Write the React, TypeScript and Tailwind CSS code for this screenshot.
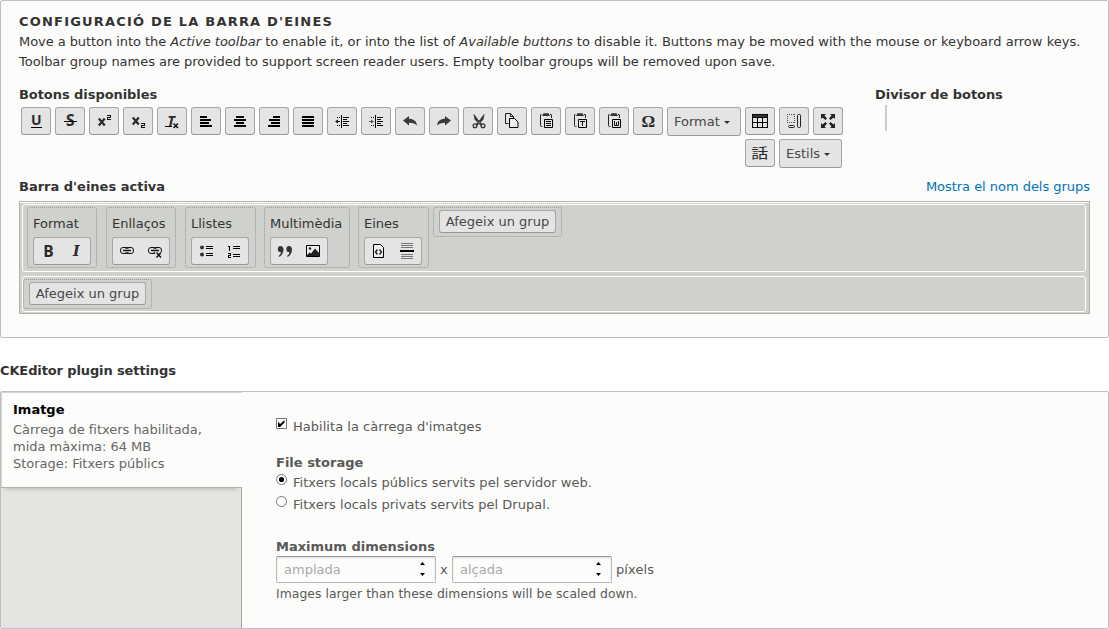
import React from "react";

type Children = { children?: React.ReactNode };

function Icon({ children }: Children) {
  return (
    <svg
      width="16"
      height="16"
      viewBox="0 0 16 16"
      fill="none"
      stroke="#111"
      strokeWidth="1"
      className="block shrink-0 overflow-visible"
    >
      {children}
    </svg>
  );
}

type GlyphProps = { x: number; y: number; size: number; italic?: boolean; bold?: boolean; text: string; family?: string };

function Glyph({ x, y, size, italic, bold = true, text, family = "DejaVu Sans, sans-serif" }: GlyphProps) {
  return (
    <text
      x={x}
      y={y}
      fontSize={size}
      fontWeight={bold ? 700 : 400}
      fontStyle={italic ? "italic" : "normal"}
      fontFamily={family}
      fill="#2b2b2b"
      stroke="none"
      textAnchor="middle"
    >
      {text}
    </text>
  );
}

const open = "Open Sans, sans-serif";

function Lines({ d, w = 2 }: { d: string; w?: number }) {
  return <path d={d} stroke="#000" strokeWidth={w} shapeRendering="crispEdges" />;
}

function Clipboard({ children }: Children) {
  return (
    <Icon>
      <path d="M3.500 1.500H3a.5.5 0 0 0-.5.5v10.500a1 1 0 0 0 1 1H4.500M12 1.500h1a.5.5 0 0 1 .5.5v3" stroke="#222" />
      <path d="M5 1.200Q5 .3 6 .3h4Q11 .3 11 1.200L12 3H4z" fill="#333" stroke="none" />
      <path d="M6.500 6.500h8v8h-8z" stroke="#000" />
      {children}
    </Icon>
  );
}

function Chain() {
  return (
    <g>
      <rect x="1.500" y="4.500" width="8" height="6" rx="2.500" />
      <rect x="6.500" y="4.500" width="8" height="6" rx="2.500" />
      <path d="M4.500 7.500h7" stroke="#e4e4e4" strokeWidth="3" />
      <path d="M4 7.500h8" strokeWidth="1.500" />
    </g>
  );
}

const icons: Record<string, React.ReactNode> = {
  underline: (
    <Icon>
      <Glyph x={8.3} y={12} size={14} text="U" family={open} />
      <Lines d="M3 14.500h11" w={1} />
    </Icon>
  ),
  strike: (
    <Icon>
      <Glyph x={8.3} y={13} size={15.500} text="S" family={open} />
      <Lines d="M2 8.500h13" w={1} />
    </Icon>
  ),
  sup: (
    <Icon>
      <path d="M2.800 5.500l6 7M8.800 5.500l-6 7" stroke="#2b2b2b" strokeWidth="2.200" />
      <path d="M11 2.500h3.500v2h-3v2H15" shapeRendering="crispEdges" />
    </Icon>
  ),
  sub: (
    <Icon>
      <path d="M2.800 4.500l6 7M8.800 4.500l-6 7" stroke="#2b2b2b" strokeWidth="2.200" />
      <path d="M11 10.500h3.500v2h-3v2H15" shapeRendering="crispEdges" />
    </Icon>
  ),
  removeFormat: (
    <Icon>
      <Glyph x={7} y={12.500} size={14.500} italic text="T" family={open} />
      <Lines d="M1 13.500h7" w={1} />
      <path d="M9.500 10.500l4.500 4.500M14 10.500L9.500 15" strokeWidth="1.500" />
    </Icon>
  ),
  left: <Icon><Lines d="M2 4h7M2 7h11M2 10h9M2 13h12" /></Icon>,
  center: <Icon><Lines d="M4 4h8M2 7h12M4 10h8M2 13h12" /></Icon>,
  right: <Icon><Lines d="M7 4h7M3 7h11M5 10h9M2 13h12" /></Icon>,
  justify: <Icon><Lines d="M2 4h12M2 7h12M2 10h12M2 13h12" /></Icon>,
  outdent: (
    <Icon>
      <Lines w={1} d="M7.500 2v13M9 4.500h6M9 6.500h4M9 8.500h6M9 10.500h4M9 12.500h6M3 4.500h1M5 4.500h1M3 12.500h1M5 12.500h1M2 8.500h4" />
      <path d="M1 8.500l3-2v4z" fill="#111" stroke="none" />
    </Icon>
  ),
  indent: (
    <Icon>
      <Lines w={1} d="M7.500 2v13M9 4.500h6M9 6.500h4M9 8.500h6M9 10.500h4M9 12.500h6M3 4.500h1M5 4.500h1M3 12.500h1M5 12.500h1" />
      <path d="M1 8.500h4" stroke="#555" />
      <path d="M6 8.500l-3-2v4z" fill="#555" stroke="none" />
    </Icon>
  ),
  undo: (
    <Icon>
      <path d="M1 7.500L7 3v2.800c4.500 0 7.500 2 8 7-2-2.300-4-3-8-3V12.500z" fill="#3a3a3a" stroke="none" />
    </Icon>
  ),
  redo: (
    <Icon>
      <path d="M15 7.500L9 3v2.800c-4.500 0-7.500 2-8 7 2-2.300 4-3 8-3V12.500z" fill="#3a3a3a" stroke="none" />
    </Icon>
  ),
  cut: (
    <Icon>
      <path d="M4 1.500l1 5 6 6 1-1-4-4.500zM14 1.500l-1 5-6 6-1-1 4-4.500z" fill="#333" stroke="#333" strokeWidth=".8" />
      <circle cx="5" cy="12.700" r="1.900" stroke="#333" strokeWidth="1.300" />
      <circle cx="13" cy="12.700" r="1.900" stroke="#333" strokeWidth="1.300" />
    </Icon>
  ),
  copy: (
    <Icon>
      <path d="M4.500 10.500h-3V.5h5l3 3M6.500.5v3h3v2" stroke="#222" />
      <path d="M5.500 5.500h5l3.500 3.500v5.500H5.500z" fill="#eee" stroke="#000" />
    </Icon>
  ),
  paste: <Clipboard><Lines w={1} d="M8 8.500h5M8 10.500h5M8 12.500h5" /></Clipboard>,
  pasteText: <Clipboard><path d="M8 8.500h5M10.500 8.500V13" stroke="#111" /></Clipboard>,
  pasteWord: <Clipboard><path d="M8.500 8v4.500h4V8M10.500 9v3" stroke="#111" /></Clipboard>,
  omega: <Icon><Glyph x={8.300} y={14} size={17} text="Ω" family="Liberation Serif, serif" /></Icon>,
  table: (
    <Icon>
      <path d="M.5 1h15v3H.5z" fill="#333" stroke="none" />
      <Lines w={1} d="M0 1.500h16M.5 1v14M5.500 4v11M10.500 4v11M15.500 1v14M0 4.500h16M0 9.500h16M0 14.500h16" />
    </Icon>
  ),
  blocks: (
    <Icon>
      <path d="M1 1.500h8M1 9.500h8M1.500 1v9M8.500 1v9" strokeDasharray="1 1" stroke="#555" shapeRendering="crispEdges" />
      <rect x="2.500" y="12.500" width="6" height="2" rx="1" stroke="#222" />
      <rect x="11.500" y="1.500" width="3" height="13" rx="1" stroke="#222" />
    </Icon>
  ),
  maximize: (
    <Icon>
      <path d="M1 1h5L4.500 2.500l2.500 3L5.500 7 2.500 4.500 1 6zM15 1v5l-1.500-1.500L10.500 7 9 5.500l2.500-3L10 1zM1 15v-5l1.500 1.500L5.500 9l1.500 1.500-2.500 3L6 15zM15 15h-5l1.500-1.500-2.500-3L10.500 9l3 2.500L15 10z" fill="#222" stroke="none" />
    </Icon>
  ),
  language: (
    <Icon>
      <g transform="translate(-0.3 1.7) scale(1.06 0.88)">
        <Glyph x={7.500} y={13.200} size={16} bold={false} text="話" family="Noto Sans CJK JP, sans-serif" />
      </g>
    </Icon>
  ),
  bold: <Icon><Glyph x={8.500} y={13.500} size={15.500} text="B" family={open} /></Icon>,
  italic: <Icon><Glyph x={8.300} y={13} size={14} italic text="I" family="DejaVu Serif, serif" /></Icon>,
  link: <Icon><Chain /></Icon>,
  unlink: (
    <Icon>
      <Chain />
      <path d="M8 9h8v6H8z" fill="#e4e4e4" stroke="none" />
      <path d="M9.500 9.500l4.500 5M14 9.500l-4.500 5" strokeWidth="1.500" />
    </Icon>
  ),
  bullets: (
    <Icon>
      <circle cx="4" cy="4.500" r="2" fill="#333" stroke="none" />
      <circle cx="4" cy="11.500" r="2" fill="#333" stroke="none" />
      <Lines w={1} d="M8 3.500h7M8 5.500h7M8 10.500h7M8 12.500h7" />
    </Icon>
  ),
  numbers: (
    <Icon>
      <Lines w={1} d="M2 3.500h1.500v4M2 10.500h2.500v2h-2v2H5M7 3.500h7M7 5.500h7M7 11.500h7M7 13.500h7" />
    </Icon>
  ),
  quote: (
    <Icon>
      <path d="M3.300 3C5.500 3 6.500 4.500 6.500 6.500c0 3.500-2 6.500-4.500 7.300L1.500 13c1.500-1 2.300-2.500 2.500-4C2 9.300.8 8 .8 6.200.8 4.200 2 3 3.300 3zM11.800 3C14 3 15 4.500 15 6.500c0 3.500-2 6.500-4.500 7.300L10 13c1.500-1 2.300-2.500 2.500-4-2 .3-3.200-1-3.200-2.800C9.300 4.200 10.500 3 11.800 3z" fill="#333" stroke="none" />
    </Icon>
  ),
  image: (
    <Icon>
      <path d="M1.500 2.500h13v11h-13z" fill="#eee" stroke="#000" />
      <circle cx="5" cy="5.500" r="1.300" fill="#222" stroke="none" />
      <path d="M2 12l2.500-2.500L6 10.500l4-5 4.500 5V13H2z" fill="#222" stroke="none" />
    </Icon>
  ),
  source: (
    <Icon>
      <path d="M2.500 1.500h7l3 3v10h-10z" fill="#eee" stroke="#000" />
      <path d="M6.500 6.500L4.500 9l2 2.500M8.500 6.500l2 2.500-2 2.500" stroke="#222" strokeWidth="1.400" />
    </Icon>
  ),
  rule: (
    <Icon>
      <path d="M2 .5h12M2 2.500h12M2 4.500h12M2 11.500h12M2 13.500h12M2 15.500h12" stroke="#777" shapeRendering="crispEdges" />
      <Lines d="M1 8h14" />
    </Icon>
  ),
};

const buttonLook = "rounded-[3px] border border-[#a6a6a6] border-b-[#979797] bg-[#e4e4e4] text-[#474747]";

function ToolButton({ name }: { name: string }) {
  return <div className={"flex h-7 w-[30px] shrink-0 items-center justify-center " + buttonLook}>{icons[name]}</div>;
}

function Combo({ label, width }: { label: string; width: string }) {
  return (
    <div className={"flex h-[29px] shrink-0 items-center pl-1.5 " + width + " " + buttonLook}>
      {label}
      <svg width="6" height="3" viewBox="0 0 6 3" className="mt-px ml-1"><path d="M0 0h6L3 3z" fill="#333" /></svg>
    </div>
  );
}

function Group({ label, items, width, gap }: { label: string; items: string[]; width: string; gap: string }) {
  return (
    <div className={"h-[61px] shrink-0 rounded-[3px] border border-dotted border-[#989898] px-[5px] pt-[5px] " + width + " " + gap}>
      <div className="h-6 leading-[22px] whitespace-nowrap">{label}</div>
      <div className={"flex h-7 w-[58px] items-center gap-3 pl-1.5 " + buttonLook}>
        {items.map((item) => <React.Fragment key={item}>{icons[item]}</React.Fragment>)}
      </div>
    </div>
  );
}

function AddGroup() {
  return (
    <div className="h-[30px] w-[129px] shrink-0 rounded-[3px] border border-dotted border-[#989898] pt-0.5 pl-[5px]">
      <div className={"flex h-[23px] w-[117px] items-center justify-center pt-px whitespace-nowrap " + buttonLook}>Afegeix un grup</div>
    </div>
  );
}

function Field({ label }: { label: string }) {
  return (
    <div className="flex h-[27px] w-40 items-center justify-between rounded-xs border border-[#b8b8b8] border-t-[#999] bg-[#fcfcfa] pr-2 pl-[7px] text-[#a9a9a9] shadow-[inset_0_1px_2px_rgba(0,0,0,0.125)]">
      {label}
      <svg width="7" height="14" viewBox="0 0 7 14" className="mr-px -mt-0.5"><path d="M1 3h5L3.500 0zM1 11h5l-2.500 3z" fill="#000" /></svg>
    </div>
  );
}

const rowOne = ["underline", "strike", "sup", "sub", "removeFormat", "left", "center", "right", "justify", "outdent", "indent", "undo", "redo", "cut", "copy", "paste", "pasteText", "pasteWord", "omega"];

export default function App() {
  return (
    <div className="h-[629px] w-[1109px] overflow-hidden bg-white text-[13px] text-[#333] [font-family:'DejaVu_Sans',sans-serif]">
      <section className="h-[338px] rounded-xs border border-[#bfbfbf] bg-[#fcfcfa] px-[18px] pt-[11px]">
        <h2 className="h-5 text-[13px] leading-5 font-bold tracking-[1.2px] uppercase">Configuració de la barra d'eines</h2>
        <p className="h-10 leading-5 whitespace-nowrap">
          <span className="tracking-[-0.06px]">Move a button into the </span>
          <em>Active toolbar</em> to enable it, or into the list of <em>Available buttons</em>
          <span className="tracking-[0.02px]"> to disable it. Buttons may be moved with the mouse or keyboard arrow keys.</span>
          <br />
          <span className="tracking-[-0.03px]">Toolbar group names are provided to support screen reader users. Empty toolbar groups will be removed upon save.</span>
        </p>
        <div className="mt-[13px] flex h-[92px]">
          <div className="w-[856px]">
            <h3 className="h-[22px] leading-5 font-bold tracking-[-0.06px]">Botons disponibles</h3>
            <div className="flex gap-1 pl-0.5">
              {rowOne.map((name) => <ToolButton key={name} name={name} />)}
              <Combo label="Format" width="w-[74px]" />
              <ToolButton name="table" />
              <ToolButton name="blocks" />
              <ToolButton name="maximize" />
            </div>
            <div className="mt-[3px] flex gap-1 pl-[726px]">
              <ToolButton name="language" />
              <Combo label="Estils" width="w-[63px]" />
            </div>
          </div>
          <div>
            <h3 className="leading-5 font-bold tracking-[-0.06px]">Divisor de botons</h3>
            <div className="ml-2.5 h-[26px] w-0.5 bg-[#ccc]" />
          </div>
        </div>
        <div className="flex h-6 justify-between leading-5">
          <h3 className="font-bold">Barra d'eines activa</h3>
          <a className="tracking-[-0.03px] text-[#0074bd]">Mostra el nom dels grups</a>
        </div>
        <div className="h-[113px] border border-[#b1b1ae] bg-[#cfd1cd] px-0.5">
          <div className="h-px -mx-0.5 bg-white" />
          <div className="mt-px mr-px flex h-[68px] rounded-[3px] border border-white pt-0.5 pl-1">
            <Group label="Format" items={["bold", "italic"]} width="w-[70px]" gap="mr-[9px]" />
            <Group label="Enllaços" items={["link", "unlink"]} width="w-[70px]" gap="mr-[9px]" />
            <Group label="Llistes" items={["bullets", "numbers"]} width="w-[71px]" gap="mr-2" />
            <Group label="Multimèdia" items={["quote", "image"]} width="w-[86px]" gap="mr-2" />
            <Group label="Eines" items={["source", "rule"]} width="w-[71px]" gap="mr-1" />
            <AddGroup />
          </div>
          <div className="mt-1 mr-px h-9 rounded-[3px] border border-white pt-0.5">
            <AddGroup />
          </div>
        </div>
      </section>

      <h2 className="mt-[23px] leading-5 font-bold tracking-[-0.12px]">CKEditor plugin settings</h2>

      <section className="mt-2.5 flex h-[238px] rounded-xs border border-[#bfbfbf] bg-[#fcfcfa]">
        <div className="w-[241px] shrink-0 border-r border-[#a6a5a1] bg-[#e6e4e1]">
          <div className="-mr-px h-24 border-b border-[#b3b2ad] bg-[#fcfcfa] pt-2 pl-3 shadow-[0_5px_5px_-5px_hsla(0,0%,0%,0.3),inset_1px_1px_0_#d4d4d2]">
            <div className="leading-5 font-bold text-black">Imatge</div>
            <div className="pt-px leading-[17px] tracking-[-0.02px] whitespace-nowrap text-[#666]">
              Càrrega de fitxers habilitada,<br />mida màxima: 64 MB<br />Storage: Fitxers públics
            </div>
          </div>
        </div>
        <div className="pt-[25px] pl-[34px] text-[#595959]">
          <div className="flex h-9 leading-5 tracking-[0.03px]">
            <svg width="11" height="11" viewBox="0 0 11 11" className="mt-px mr-1.5">
              <path d="M.5.5h10v10H.5z" fill="#fff" stroke="#777" />
              <path d="M2 4l2.200 2L8.500 2v2.500L4 9H2z" fill="#000" />
            </svg>
            Habilita la càrrega d'imatges
          </div>
          <h4 className="leading-5 font-bold">File storage</h4>
          <div className="flex h-[22px] leading-5 tracking-[0.03px]">
            <svg width="11" height="11" viewBox="0 0 11 11" className="mt-px mr-1.5">
              <circle cx="5.500" cy="5.500" r="5" fill="#fff" stroke="#777" />
              <circle cx="5.500" cy="5.500" r="2.600" fill="#000" />
            </svg>
            Fitxers locals públics servits pel servidor web.
          </div>
          <div className="flex h-[42px] leading-5 tracking-[0.03px]">
            <svg width="11" height="11" viewBox="0 0 11 11" className="mt-px mr-1.5">
              <circle cx="5.500" cy="5.500" r="5" fill="#fff" stroke="#777" />
            </svg>
            Fitxers locals privats servits pel Drupal.
          </div>
          <h4 className="h-[19px] leading-5 font-bold">Maximum dimensions</h4>
          <div className="flex items-center gap-1">
            <Field label="amplada" /><span className="w-2">x</span><Field label="alçada" /><span className="tracking-[0.1px]">píxels</span>
          </div>
          <div className="text-[12.35px] leading-[22px] tracking-[0.06px]">Images larger than these dimensions will be scaled down.</div>
        </div>
      </section>
    </div>
  );
}
